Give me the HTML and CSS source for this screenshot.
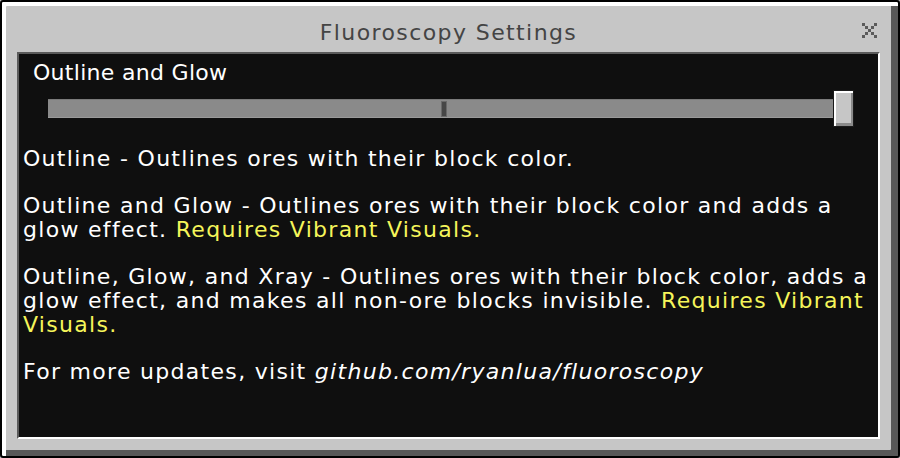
FILE: index.html
```html
<!DOCTYPE html>
<html lang="en">
<head>
<meta charset="utf-8">
<title>Fluoroscopy Settings</title>
<link rel="stylesheet" href="styles.css">
</head>
<body>
  <div class="window">
    <header class="titlebar">
      <span class="spacer"></span>
      <h1 class="title">Fluoroscopy Settings</h1>
      <button class="close" aria-label="Close">
        <svg width="15" height="15" viewBox="0 0 15 15" shape-rendering="crispEdges">
          <g fill="#5a5a5a">
            <rect x="0" y="0" width="3" height="3"/>
            <rect x="12" y="0" width="3" height="3"/>
            <rect x="3" y="3" width="3" height="3"/>
            <rect x="9" y="3" width="3" height="3"/>
            <rect x="6" y="6" width="3" height="3"/>
            <rect x="3" y="9" width="3" height="3"/>
            <rect x="9" y="9" width="3" height="3"/>
            <rect x="0" y="12" width="3" height="3"/>
            <rect x="12" y="12" width="3" height="3"/>
          </g>
        </svg>
      </button>
    </header>

    <main class="panel">
      <section class="setting">
        <div class="label">Outline and Glow</div>
        <div class="slider">
          <div class="track"><span class="tick"></span></div>
          <div class="thumb"></div>
        </div>
      </section>

      <p class="desc">Outline - Outlines ores with their block color.</p>
      <p class="desc">Outline and Glow - Outlines ores with their block color and adds a<br>glow effect. <span class="note">Requires Vibrant Visuals.</span></p>
      <p class="desc">Outline, Glow, and Xray - Outlines ores with their block color, adds a<br>glow effect, and makes all non-ore blocks invisible. <span class="note">Requires Vibrant<br>Visuals.</span></p>
      <p class="desc">For more updates, visit <em class="link">github.com/ryanlua/fluoroscopy</em></p>
    </main>
  </div>
</body>
</html>
```

FILE: styles.css
```css
* {
  box-sizing: border-box;
}

html,
body {
  margin: 0;
  padding: 0;
  background: #c6c6c6;
}

body {
  width: 900px;
  height: 458px;
  font-family: "DejaVu Sans", "Liberation Sans", sans-serif;
  font-size: 22px;
  line-height: 24px;
  letter-spacing: 1.3px;
}

/* Outer bevelled frame */
.window {
  width: 900px;
  height: 458px;
  border: 2px solid #000;
  border-radius: 3px;
  background: #c6c6c6;
  box-shadow: inset 4px 4px 0 #ffffff, inset -7px -6px 0 #585858;
  padding: 3px 18px 17px 15px;
  display: flex;
  flex-direction: column;
}

.titlebar {
  height: 47px;
  display: grid;
  grid-template-columns: 1fr auto 1fr;
  align-items: start;
  padding-top: 16px;
}

.title {
  margin: 0;
  font-size: 22px;
  font-weight: normal;
  line-height: 24px;
  color: #444444;
  letter-spacing: 1.4px;
}

.close {
  justify-self: end;
  margin: 2px 3px 0 0;
  padding: 0;
  width: 15px;
  height: 15px;
  border: 0;
  background: transparent;
  display: flex;
}

/* Dark inset content panel */
.panel {
  flex: 1;
  background: #0f0f0f;
  border-top: 2px solid #5a5a5a;
  border-left: 2px solid #5a5a5a;
  border-right: 2px solid #ffffff;
  border-bottom: 2px solid #ffffff;
  padding: 7px 4px 0 4px;
  color: #ffffff;
}

.setting {
  padding: 0 20px 0 10px;
}

.label {
  white-space: nowrap;
  letter-spacing: 0.3px;
}

.slider {
  margin: 5px 0 0 15px;
  height: 37px;
  display: flex;
  align-items: center;
}

.track {
  position: relative;
  flex: 1;
  height: 19px;
  background: #8a8a8a;
  border-top: 1px solid #7a7a7a;
  border-bottom: 1px solid #9a9a9a;
  margin-top: -1px;
}

.tick {
  position: absolute;
  left: 394px;
  top: 2px;
  width: 4px;
  height: 14px;
  background: #474747;
  box-shadow: 0 0 0 1px #6a6a6a;
}

.thumb {
  width: 21px;
  height: 37px;
  background: #c6c6c6;
  border: 1px solid #1a1a1a;
  box-shadow: inset 2px 2px 0 #ffffff, inset -2px -3px 0 #8a8a8a;
}

.desc {
  margin: 20px 0 0 0;
  white-space: nowrap;
}

.desc + .desc {
  margin-top: 23px;
}

.note {
  color: #f5f55a;
}

.link {
  font-style: italic;
}
```
